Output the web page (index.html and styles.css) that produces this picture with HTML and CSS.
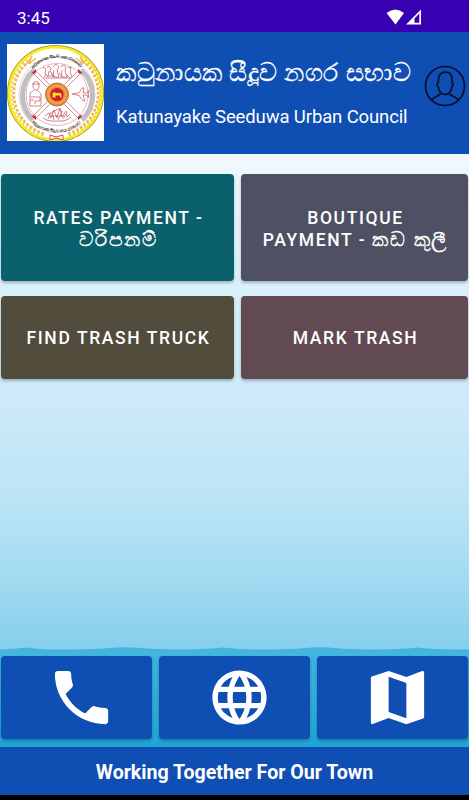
FILE: index.html
```
<!DOCTYPE html>
<html lang="en">
<head>
    <meta charset="UTF-8">
    <meta name="viewport" content="width=device-width, initial-scale=1.0">
    <title>Katunayake Seeduwa Urban Council</title>
    <link rel="stylesheet" href="styles.css">
</head>
<body>

<div class="status-bar">
    <span class="time">3:45</span>
    <svg class="signals" width="37" height="17" viewBox="0 0 37 17">
        <path d="M0.5 4 Q9.5 -3 18 4 L9.5 15.5 Z" fill="#fff"/>
        <path d="M20 15.5 L35 0.5 V15.5 Z" fill="#fff"/>
        <path d="M28.5 9.5 L33.3 4.5 V13.8 H28.5 Z" fill="#3700b3"/>
    </svg>
</div>

<header class="header">
    <svg class="emblem" viewBox="0 0 97 97">
        <defs>
            <path id="arc-top" d="M25 25.5 A33 33 0 0 1 76 25.5"/>
            <path id="arc-bottom" d="M24 77.5 A37 37 0 0 0 76 77.5"/>
            <!-- one arm of the cross -->
            <g id="arm">
                <path d="M-1.8 -12 L-1.8 -33 H1.8 L1.8 -12" fill="#fff" stroke="#d48c8c" stroke-width=".9"/>
                <path d="M-3.5 -33 H3.5 L0 -30 Z" fill="#c8243a"/>
            </g>
        </defs>
        <rect width="97" height="97" fill="#fff"/>
        <circle cx="48.5" cy="49.5" r="47.5" fill="none" stroke="#9a8b38" stroke-width="2"/>
        <circle cx="48.5" cy="49.5" r="46.4" fill="none" stroke="#f7ec20" stroke-width="2.8"/>
        <!-- wheat ears -->
        <g fill="none" stroke="#eebb50">
            <path d="M22 17 A42 42 0 0 0 38 90" stroke-width="2.8" stroke-dasharray="2.8 1.6"/>
            <path d="M76 17 A42 42 0 0 1 60 90" stroke-width="2.8" stroke-dasharray="2.8 1.6"/>
            <path d="M20 15.5 A44.5 44.5 0 0 0 37 92" stroke-width="1.5" stroke-dasharray="2 2.4"/>
            <path d="M78 15.5 A44.5 44.5 0 0 1 61 92" stroke-width="1.5" stroke-dasharray="2 2.4"/>
            <path d="M18 22 L25 12 L22 20 L29 14 M80 22 L73 12 L76 20 L69 14" stroke-width="1.3"/>
        </g>
        <!-- inner ring -->
        <circle cx="50" cy="50.5" r="38" fill="none" stroke="#dfa5a5" stroke-width=".6"/>
        <path d="M27 26 A34 34 0 0 0 26 76 M74 26 A34 34 0 0 1 75 76" fill="none" stroke="#bfbfc3" stroke-width="5"/>
        <path d="M25 23 A37 37 0 0 1 75 23" fill="none" stroke="#cfcfd3" stroke-width="1.5"/>
        <circle cx="50" cy="50.5" r="31" fill="#fff" stroke="#dda0a6" stroke-width=".8"/>
        <text class="emblem-text" textLength="54" lengthAdjust="spacingAndGlyphs"><textPath href="#arc-top" startOffset="1">කටුනායක සීදූව නගර සභාව</textPath></text>
        <text class="emblem-text" textLength="54" lengthAdjust="spacingAndGlyphs"><textPath href="#arc-bottom" startOffset="1">කටුනායක සීදූව නගර සභාව</textPath></text>
        <use href="#arm" transform="translate(50 50.5) rotate(45)"/>
        <use href="#arm" transform="translate(50 50.5) rotate(135)"/>
        <use href="#arm" transform="translate(50 50.5) rotate(225)"/>
        <use href="#arm" transform="translate(50 50.5) rotate(315)"/>
        <g fill="none" stroke="#c4525b" stroke-width=".7">
            <!-- people -->
            <path d="M36 23 l3 2 l-1 4 l3 4 M40 24 l2 -2 l2 2 l-1 3 l3 5 h-5 l1 -5 M46 23 l3 -3 l3 3 l-2 3 l2 7 h-6 l1 -7 M54 23 l2 -2 l3 2 l-1 3 l2 7 h-6 l1 -7 M61 24 l3 -1 l-1 5 l2 5 M38 34 h26 M39 30 l-2 4 M44 29 l4 4 M52 29 l4 4 M59 30 l4 4"/>
            <!-- seated worker -->
            <path d="M26 41 a3 3.5 0 0 1 6 0 q0 5 -3 5 q-3 0 -3 -5 M25 40 h8 M27 46 l-4 3 v13 h11 v-12 l-4 -4 M24 53 h9 v4 h-5 v3 M23 56 h4"/>
            <!-- plane -->
            <path d="M65 50 L72 48.8 L75 44 H77 L76 49 L79 49 L82 46.5 L81 50 L82 53.5 L79 51 L76 51.2 L78 57 H76 L72 51.5 Z"/>
            <!-- harvest -->
            <path d="M36 74 q5 4 14 3 q9 1 14 -4 M38 72 l4 -3 l2 5 l3 -8 l3 8 l3 -10 l2 9 l4 -6 l1 6 l3 -3 M41 75 l3 -7 M47 76 l-2 -8 l6 -3 l5 3 M51 76 l4 -8 M56 75 l3 -5 M44 72 h13"/>
        </g>
        <!-- hub -->
        <circle cx="50" cy="50.5" r="11.5" fill="#e9893e" stroke="#b8713c" stroke-width="1"/>
        <circle cx="50" cy="50.5" r="8.8" fill="none" stroke="#f3b458" stroke-width="2" stroke-dasharray="1.5 1"/>
        <circle cx="50" cy="50.5" r="6.6" fill="#cf1f2b"/>
        <path d="M45.5 53.5 V49.5 L47 48 L49 49 H53.5 L54.5 50.5 V53.5 H53 V51.5 H48.5 V53.5 Z" fill="#ffdf20"/>
        <path d="M43 91 l6 2 l7 -2 v5 l-7 -2 l-6 2 z" fill="#fff" stroke="#d44a4a"/>
    </svg>
    <div class="titles">
        <h1 lang="si">කටුනායක සීදූව නගර සභාව</h1>
        <h2>Katunayake Seeduwa Urban Council</h2>
    </div>
    <svg class="profile" viewBox="0 0 42 42" fill="none" stroke="#06102c" stroke-width="1.7">
        <circle cx="21" cy="21" r="19.5"/>
        <path d="M14.5 14 C15 9 18 7.2 21 7.2 C25 7.2 28 9.5 28 14 V18 C29.5 18 29.5 20 28 22 C27 27 24 29.5 21 29.5 C18 29.5 15 27 14.3 22 C12.5 20 12.5 18 14.2 18 Z"/>
        <path d="M7.5 35 C10 32 13 32 16.5 29 M34.5 35 C32 32 29 32 25.5 29"/>
    </svg>
</header>

<main class="content">
    <div class="menu">
        <button class="card rates">RATES PAYMENT -<br><span lang="si">වරිපනම්</span></button>
        <button class="card boutique">BOUTIQUE<br>PAYMENT - <span lang="si">කඩ කුලී</span></button>
        <button class="card truck">FIND TRASH TRUCK</button>
        <button class="card mark">MARK TRASH</button>
    </div>

    <div class="sea">
        <svg class="wave" viewBox="0 0 469 9" preserveAspectRatio="none">
            <path d="M0 2.5 Q14 1.6 28 .4 Q40 2.4 55 2.4 Q88 2.8 110 1 Q125 -.6 140 1 Q155 2.6 185 2.4 Q210 2 222 .4 Q240 2.6 260 2.4 Q285 2.8 305 1 Q320 -.6 335 1 Q355 2.8 380 2.4 Q405 2 418 .4 Q432 2.4 469 2.5 V9 H0 Z" fill="#43b5df"/>
        </svg>
        <div class="actions">
            <button class="action" aria-label="Call">
                <svg viewBox="0 0 24 24"><path d="M6.62 10.79c1.44 2.83 3.76 5.14 6.59 6.59l2.2-2.2c.27-.27.67-.36 1.02-.24 1.12.37 2.33.57 3.57.57.55 0 1 .45 1 1V20c0 .55-.45 1-1 1-9.39 0-17-7.61-17-17 0-.55.45-1 1-1h3.5c.55 0 1 .45 1 1 0 1.25.2 2.45.57 3.57.11.35.03.74-.25 1.02l-2.2 2.2z"/></svg>
            </button>
            <button class="action" aria-label="Website">
                <svg class="globe" viewBox="0 0 24 24"><path d="M11.99 2C6.47 2 2 6.48 2 12s4.47 10 9.99 10C17.52 22 22 17.52 22 12S17.52 2 11.99 2zm6.93 6h-2.95c-.32-1.25-.78-2.45-1.38-3.56 1.84.63 3.37 1.91 4.33 3.56zM12 4.04c.83 1.2 1.48 2.53 1.91 3.96h-3.82c.43-1.43 1.08-2.76 1.91-3.96zM4.26 14C4.1 13.36 4 12.69 4 12s.1-1.36.26-2h3.38c-.08.66-.14 1.32-.14 2s.06 1.34.14 2H4.26zm.82 2h2.95c.32 1.25.78 2.45 1.38 3.56-1.84-.63-3.37-1.9-4.33-3.56zm2.95-8H5.08c.96-1.66 2.49-2.93 4.33-3.56C8.81 5.55 8.35 6.75 8.03 8zM12 19.96c-.83-1.2-1.48-2.53-1.91-3.96h3.82c-.43 1.43-1.08 2.76-1.91 3.96zM14.34 14H9.66c-.09-.66-.16-1.32-.16-2s.07-1.35.16-2h4.68c.09.65.16 1.32.16 2s-.07 1.34-.16 2zm.25 5.56c.6-1.11 1.06-2.31 1.38-3.56h2.95c-.96 1.65-2.49 2.93-4.33 3.56zM16.36 14c.08-.66.14-1.32.14-2s-.06-1.34-.14-2h3.38c.16.64.26 1.31.26 2s-.1 1.36-.26 2h-3.38z"/></svg>
            </button>
            <button class="action" aria-label="Map">
                <svg viewBox="0 0 24 24"><path d="M20.5 3l-.16.03L15 5.1 9 3 3.36 4.9c-.21.07-.36.25-.36.48V20.5c0 .28.22.5.5.5l.16-.03L9 18.9l6 2.1 5.64-1.9c.21-.07.36-.25.36-.48V3.5c0-.28-.22-.5-.5-.5zM15 19l-6-2.11V5l6 2.11V19z"/></svg>
            </button>
        </div>
    </div>
</main>

<footer class="footer">Working Together For Our Town</footer>

</body>
</html>
```

FILE: styles.css
```
* {
    box-sizing: border-box;
}

body {
    display: flex;
    flex-direction: column;
    height: 100vh;
    margin: 0;
    background: #000;
    color: #fff;
    font-family: Roboto, "Noto Sans", sans-serif;
    overflow: hidden;
}

.status-bar {
    display: flex;
    justify-content: space-between;
    align-items: center;
    flex: 0 0 32px;
    padding: 3px 46px 0 17px;
    background: #3700b3;
}

.time {
    font-size: 17px;
}

.header {
    display: flex;
    flex: 0 0 122px;
    padding: 12px 3px 0 7px;
    background: #0f4eb3;
}

.emblem {
    width: 97px;
    height: 97px;
}

.emblem-text {
    font-size: 4px;
    font-weight: bold;
    fill: #222;
}

.titles {
    flex: 1;
    width: 0;
    padding-left: 12px;
    white-space: nowrap;
}

.titles h1 {
    height: 57px;
    margin: 0;
    font-size: 25.1px;
    font-weight: 400;
    line-height: 57px;
    letter-spacing: 0.5px;
    -webkit-text-stroke: 0.4px #fff;
}

.titles h2 {
    margin: 0;
    font-size: 18.5px;
    font-weight: 400;
    line-height: 33px;
    letter-spacing: -0.12px;
}

.profile {
    width: 42px;
    height: 42px;
    margin-top: 21px;
}

.content {
    display: flex;
    flex-direction: column;
    justify-content: space-between;
    flex: 1;
    background: linear-gradient(#f0f9fd, #daf0fb 22%, #cbe9f8 44%, #bde5f6 57%, #a3dbf1 71%, #86d0ed 83%);
}

.menu {
    display: grid;
    grid-template-columns: 233px 227px;
    grid-template-rows: 107px 83px;
    gap: 15px 7px;
    padding: 20px 1px 0;
}

.card,
.action {
    border: none;
    border-radius: 4px;
    color: #fff;
    box-shadow: 0 2px 3px rgba(0, 0, 0, 0.25);
    cursor: pointer;
}

.card {
    padding: 1px 0 0 2px;
    font-family: inherit;
    font-size: 17.5px;
    font-weight: 500;
    line-height: 22px;
    letter-spacing: 1.6px;
}

.card span {
    font-size: 19.8px;
    line-height: 20px;
    letter-spacing: 1.8px;
    -webkit-text-stroke: 0.5px #fff;
}

.rates {
    padding-top: 2px;
    background: #0b606e;
}

.boutique {
    padding-top: 2px;
    background: #4f5063;
}

.truck {
    background: #514c3b;
}

.mark {
    background: #614a52;
}

.sea {
    background: linear-gradient(#43b5df, #1fa5d6);
}

.wave {
    display: block;
    width: 100%;
    height: 9px;
    background: #86d0ed;
}

.actions {
    display: grid;
    grid-template-columns: repeat(3, 1fr);
    gap: 7px;
    padding: 0 1px 8px;
}

.action {
    display: flex;
    justify-content: center;
    align-items: center;
    height: 83px;
    padding: 0 0 0 9px;
    background: #0f4eb3;
}

.action svg {
    width: 71px;
    height: 71px;
    fill: #fff;
}

.action .globe {
    width: 65px;
    height: 65px;
}

.footer {
    flex: 0 0 48px;
    margin-bottom: 5px;
    padding-top: 3px;
    background: #0f4eb3;
    font-size: 19.6px;
    font-weight: 700;
    line-height: 45px;
    text-align: center;
}
```
